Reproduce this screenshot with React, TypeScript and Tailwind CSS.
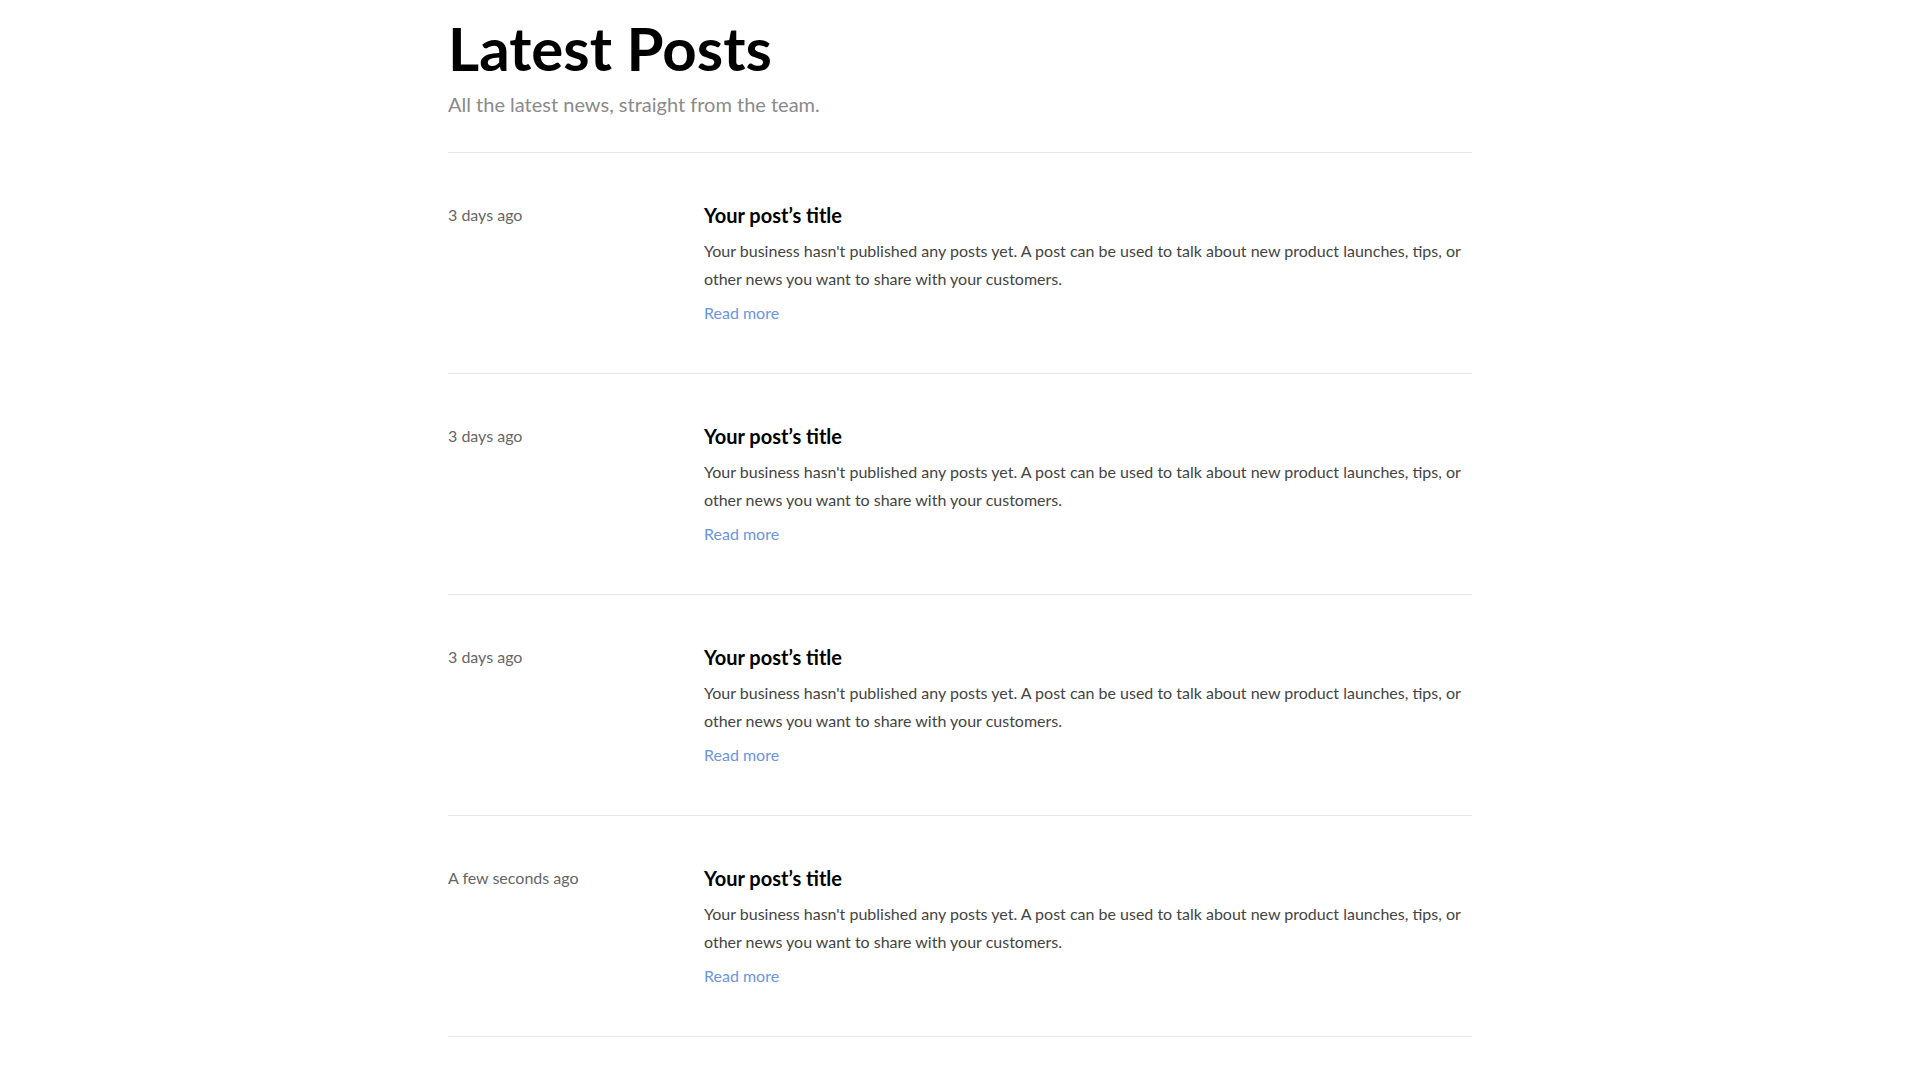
const posts = [
  { date: "3 days ago" },
  { date: "3 days ago" },
  { date: "3 days ago" },
  { date: "A few seconds ago" },
];

export default function App() {
  return (
    <div
      className="min-h-screen bg-white"
      style={{ fontFamily: "Lato, 'Liberation Sans', sans-serif" }}
    >
      <div className="mx-auto w-[1024px] pt-[18px]">
        <header className="pb-[34px] border-b border-[#e6e6e6]">
          <h1 className="text-[60px] leading-none font-bold text-black">
            Latest Posts
          </h1>
          <p className="mt-[12px] text-[20px] leading-7 text-[#8a8a8a]">
            All the latest news, straight from the team.
          </p>
        </header>

        {posts.map((post, i) => (
          <article
            key={i}
            className="flex pt-12 pb-12 border-b border-[#e6e6e6]"
          >
            <div className="w-64 shrink-0 text-[16px] leading-7 text-[#666666]">
              {post.date}
            </div>
            <div className="flex-1">
              <h2 className="text-[20px] leading-7 font-bold text-black">
                Your post’s title
              </h2>
              <p className="mt-2 text-[16px] leading-7 text-[#444444]">
                Your business hasn't published any posts yet. A post can be used
                to talk about new product launches, tips, or other news you want
                to share with your customers.
              </p>
              <a
                href="#"
                className="mt-2 block text-[16px] leading-6 text-[#6b95e0]"
              >
                Read more
              </a>
            </div>
          </article>
        ))}
      </div>
    </div>
  );
}
